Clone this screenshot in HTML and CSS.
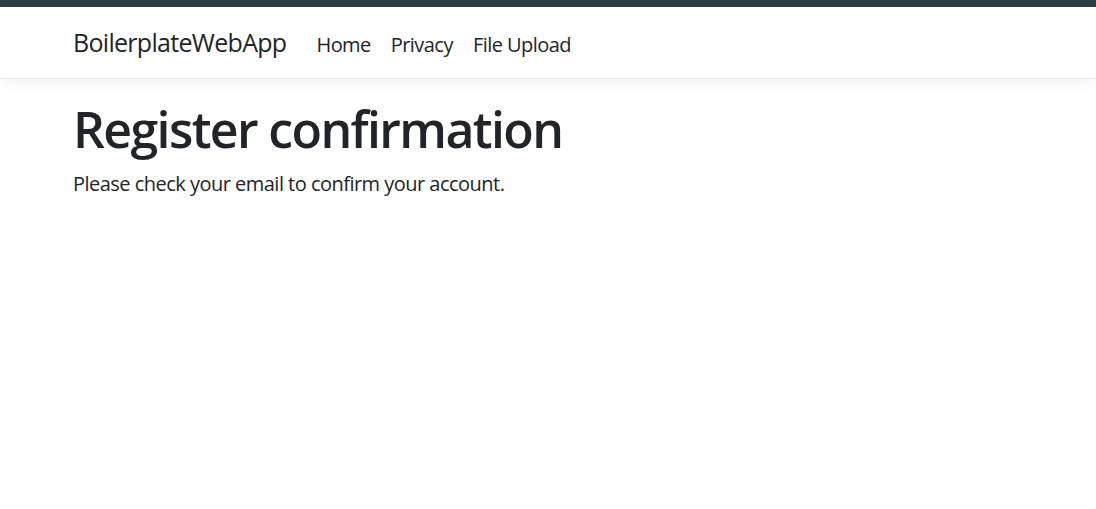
FILE: index.html
```html
<!DOCTYPE html>
<html lang="en">
<head>
<meta charset="utf-8">
<title>Register confirmation - BoilerplateWebApp</title>
<link rel="stylesheet" href="styles.css">
</head>
<body>
<div class="topbar"></div>
<header class="navbar">
  <div class="container nav-inner">
    <a class="brand" href="#">BoilerplateWebApp</a>
    <nav class="nav">
      <a class="nav-link" href="#">Home</a>
      <a class="nav-link" href="#">Privacy</a>
      <a class="nav-link" href="#">File Upload</a>
    </nav>
  </div>
</header>
<main class="container content">
  <h1 class="title">Register confirmation</h1>
  <p class="text">Please check your email to confirm your account.</p>
</main>
</body>
</html>
```
FILE: styles.css
```css
* { box-sizing: border-box; }
html, body { margin: 0; padding: 0; }
body {
  font-family: "Open Sans", "Noto Sans", sans-serif;
  color: #212529;
  background: #fff;
  font-size: 20px;
}
.topbar { height: 7px; background: #2c3e45; }
.container { padding-left: 73px; padding-right: 73px; }
.navbar {
  height: 72px;
  border-bottom: 1px solid #e5e5e5;
  box-shadow: 0 4px 12px rgba(0,0,0,0.05);
  display: flex;
  align-items: center;
  background: #fff;
}
.nav-inner { display: flex; align-items: baseline; width: 100%; }
.brand {
  font-size: 25px;
  line-height: 37.5px;
  letter-spacing: -0.7px;
  color: #212529;
  text-decoration: none;
  margin-right: 20px;
}
.nav { display: flex; align-items: baseline; }
.nav-link {
  font-size: 20px;
  line-height: 30px;
  letter-spacing: -0.55px;
  padding: 0 10px;
  color: #212529;
  text-decoration: none;
}
.content { padding-top: 20px; }
.title {
  margin: 0 0 10px;
  font-size: 50px;
  line-height: 60px;
  font-weight: 600;
  letter-spacing: -1.62px;
}
.text { margin: 0; font-size: 20px; line-height: 30px; letter-spacing: -0.52px; }
```
